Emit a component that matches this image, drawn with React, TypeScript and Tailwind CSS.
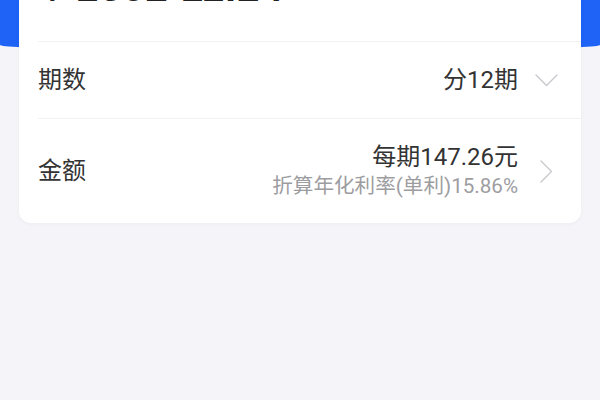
const font = { fontFamily: 'Roboto, "Noto Sans CJK SC", sans-serif' };

function ChevronDown() {
  return (
    <svg width="23" height="13" viewBox="0 0 23 13" fill="none">
      <polyline points="1,1 11.5,11.5 22,1" stroke="#c9c9cd" strokeWidth="1.4" strokeLinecap="round" strokeLinejoin="round" />
    </svg>
  );
}

function ChevronRight() {
  return (
    <svg width="13" height="23" viewBox="0 0 13 23" fill="none">
      <polyline points="1,1 11.5,11.5 1,22" stroke="#c9c9cd" strokeWidth="1.4" strokeLinecap="round" strokeLinejoin="round" />
    </svg>
  );
}

export default function App() {
  return (
    <div className="w-[600px] h-[400px] overflow-hidden bg-[#f4f4f9]" style={font}>
      {/* blue header band */}
      <div className="h-[51px] bg-[#1f63f6] rounded-bl-[50%_6px] rounded-br-[50%_6px]" />

      <div className="mx-[19px] -mt-[101px] bg-white rounded-[12px] shadow-[0_1px_4px_rgba(0,0,0,0.04)]">
        {/* amount section, mostly scrolled off the top */}
        <div className="ml-[19px] pr-[23px] h-[92px] border-b border-[#f2f2f4] flex items-end justify-between pb-[34px]">
          <div className="ml-[6px] text-[40px] font-bold leading-none text-[#222] tracking-[1px]" style={{ fontFamily: '"Liberation Sans", Arial, sans-serif' }}>
            <span className="text-[30px] mr-[14px]">¥</span>1602 11.24
          </div>
          <div className="text-[18px] leading-none text-[#c4c4c8] mb-[6px]">明细</div>
        </div>

        {/* installments row */}
        <div className="ml-[19px] pr-[23px] h-[77px] border-b border-[#f2f2f4] flex items-center justify-between">
          <span className="text-[24px] text-[#333]">期数</span>
          <div className="flex items-center gap-[17px]">
            <span className="text-[24px] text-[#333]">分12期</span>
            <ChevronDown />
          </div>
        </div>

        {/* amount per period row */}
        <div className="ml-[19px] pr-[28px] h-[104px] flex items-center justify-between">
          <span className="text-[24px] text-[#333]">金额</span>
          <div className="flex items-center gap-[22px]">
            <div className="flex flex-col items-end">
              <span className="text-[24px] leading-[31px] text-[#333]">每期147.26元</span>
              <span className="text-[20.6px] leading-[27px] text-[#9d9da1]">折算年化利率(单利)15.86%</span>
            </div>
            <ChevronRight />
          </div>
        </div>
      </div>
    </div>
  );
}
